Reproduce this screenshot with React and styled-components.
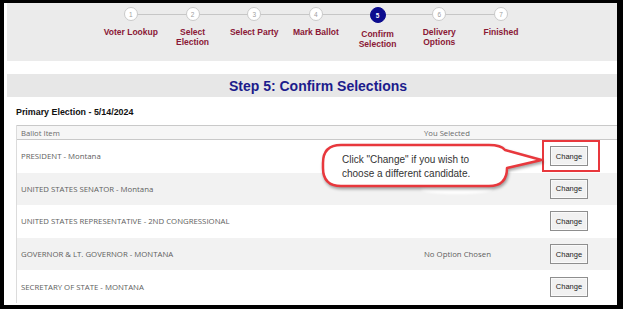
import React from 'react';
import styled, { createGlobalStyle } from 'styled-components';

const GlobalStyle = createGlobalStyle`
  html, body { margin: 0; padding: 0; background: #000; }
  * { box-sizing: border-box; }
`;

const Frame = styled.div`
  position: relative;
  width: 623px;
  height: 309px;
  border-style: solid;
  border-color: #000;
  border-width: 3px 6px 4px 4px;
  background: #fff;
  padding-left: 3px;
  display: flex;
  flex-direction: column;
  overflow: hidden;
  font-family: "Liberation Sans", Arial, sans-serif;
`;

const StepperPanel = styled.div`
  height: 58px;
  flex: none;
  background: #ebebeb;
  display: flex;
  padding-left: 93px;
`;

const Step = styled.div`
  position: relative;
  width: 61.7px;
  display: flex;
  flex-direction: column;
  align-items: center;
  &:not(:last-child)::after {
    content: '';
    position: absolute;
    top: 11px;
    left: 50%;
    width: 100%;
    height: 1px;
    background: #c6c6c6;
  }
`;

const Circle = styled.div`
  position: relative;
  z-index: 1;
  margin-top: 4px;
  width: ${p => (p.$active ? 16 : 14)}px;
  height: ${p => (p.$active ? 16 : 14)}px;
  border-radius: 50%;
  background: ${p => (p.$active ? '#0c0c8e' : '#fff')};
  border: ${p => (p.$active ? '1px solid #0c0c8e' : '1.5px solid #cacaca')};
  color: ${p => (p.$active ? '#fff' : '#a0a0a0')};
  font-size: 6.5px;
  font-weight: ${p => (p.$active ? 'bold' : 'normal')};
  display: flex;
  align-items: center;
  justify-content: center;
`;

const StepLabel = styled.div`
  margin-top: 7px;
  font-size: 8.5px;
  line-height: 9.5px;
  font-weight: bold;
  color: #8a1836;
  text-align: center;
  white-space: nowrap;
`;

const TitleBar = styled.div`
  margin-top: 13px;
  height: 23px;
  flex: none;
  background: #e7e7e7;
  display: flex;
  align-items: center;
  justify-content: center;
  padding-left: 12px;
  font-size: 14px;
  font-weight: bold;
  color: #1c1c8c;
`;

const ElectionHeading = styled.div`
  margin: 10px 0 0 9px;
  font-size: 8.9px;
  line-height: 10px;
  font-weight: bold;
  color: #111;
`;

const Table = styled.div`
  margin: 8px 0 0 9px;
  border-left: 1px solid #dcdcdc;
  font-family: "Open Sans", "Noto Sans", sans-serif;
  font-size: 7.8px;
  color: #5e5e5e;
`;

const HeaderRow = styled.div`
  display: grid;
  grid-template-columns: 403px 101px 1fr;
  height: 15px;
  align-items: center;
  background: #f6f6f6;
  border-top: 1px solid #c9c9c9;
  border-bottom: 1px solid #c9c9c9;
  color: #6a6a6a;
  font-size: 7.7px;
`;

const Row = styled.div`
  display: grid;
  grid-template-columns: 403px 101px 1fr;
  height: 32.6px;
  align-items: center;
  background: ${p => (p.$striped ? '#f2f2f2' : '#fff')};
`;

const Cell = styled.div`
  padding-left: 4px;
  white-space: nowrap;
`;

const ActionCell = styled.div`
  display: flex;
  justify-content: center;
`;

const ChangeButton = styled.button`
  width: 38px;
  height: 20px;
  padding: 0;
  border: 1px solid #8e8e8e;
  background: #f1f1f1;
  box-shadow: inset 0 0 0 1px #fafafa;
  font-family: "Liberation Sans", Arial, sans-serif;
  font-size: 7.5px;
  color: #222;
`;

const Highlight = styled.div`
  position: absolute;
  left: 538px;
  top: 137px;
  width: 58px;
  height: 32px;
  border: 2px solid #e8383d;
`;

const Callout = styled.div`
  position: absolute;
  left: 314px;
  top: 137px;
  width: 232px;
  height: 54px;
`;

const CalloutShape = styled.svg`
  position: absolute;
  left: 0;
  top: 0;
  filter: drop-shadow(1px 2px 1.5px rgba(0, 0, 0, 0.35));
`;

const CalloutText = styled.div`
  position: relative;
  padding: 13px 0 0 24px;
  font-family: "Liberation Sans", Arial, sans-serif;
  font-size: 10px;
  line-height: 14px;
  color: #333;
  white-space: nowrap;
`;

const Smudge = styled.div`
  position: absolute;
  left: 417px;
  top: 182px;
  width: 71px;
  height: 9px;
  border-radius: 50%;
  background: #fff;
  filter: blur(1px);
`;

const steps = [
  { n: 1, label: ['Voter Lookup'] },
  { n: 2, label: ['Select', 'Election'] },
  { n: 3, label: ['Select Party'] },
  { n: 4, label: ['Mark Ballot'] },
  { n: 5, label: ['Confirm', 'Selection'], active: true },
  { n: 6, label: ['Delivery', 'Options'] },
  { n: 7, label: ['Finished'] },
];

const rows = [
  { item: 'PRESIDENT - Montana', selected: '' },
  { item: 'UNITED STATES SENATOR - Montana', selected: '' },
  { item: 'UNITED STATES REPRESENTATIVE - 2ND CONGRESSIONAL', selected: '' },
  { item: 'GOVERNOR & LT. GOVERNOR - MONTANA', selected: 'No Option Chosen' },
  { item: 'SECRETARY OF STATE - MONTANA', selected: '' },
];

export default function App() {
  return (
    <>
      <GlobalStyle />
      <Frame>
        <StepperPanel>
          {steps.map(s => (
            <Step key={s.n}>
              <Circle $active={s.active}>{s.n}</Circle>
              <StepLabel>
                {s.label.map((l, i) => (
                  <React.Fragment key={i}>
                    {i > 0 && <br />}
                    {l}
                  </React.Fragment>
                ))}
              </StepLabel>
            </Step>
          ))}
        </StepperPanel>
        <TitleBar>Step 5: Confirm Selections</TitleBar>
        <ElectionHeading>Primary Election - 5/14/2024</ElectionHeading>
        <Table>
          <HeaderRow>
            <Cell>Ballot Item</Cell>
            <Cell>You Selected</Cell>
            <div />
          </HeaderRow>
          {rows.map((r, i) => (
            <Row key={i} $striped={i % 2 === 1}>
              <Cell>{r.item}</Cell>
              <Cell>{r.selected}</Cell>
              <ActionCell>
                <ChangeButton>Change</ChangeButton>
              </ActionCell>
            </Row>
          ))}
        </Table>
        <Smudge />
        <Highlight />
        <Callout>
          <CalloutShape width="232" height="54" viewBox="0 0 232 54">
            <path
              d="M23 5 H171 Q183 5 187 10 L223.5 20 L189 28 Q189 46 171 46 H23 Q5 46 5 28 V23 Q5 5 23 5 Z"
              fill="#fff"
              stroke="#e8383d"
              strokeWidth="2.5"
              strokeLinejoin="round"
            />
          </CalloutShape>
          <CalloutText>
            Click "Change" if you wish to
            <br />
            choose a different candidate.
          </CalloutText>
        </Callout>
      </Frame>
    </>
  );
}
